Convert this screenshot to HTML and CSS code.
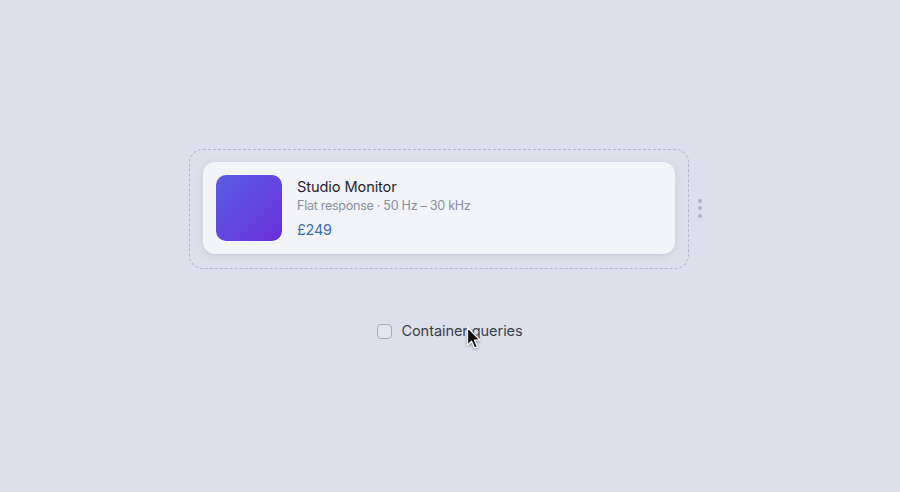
FILE: index.html
```html
<!DOCTYPE html>
<html lang="en">
<head>
<meta charset="utf-8">
<title>Container queries</title>
<link rel="stylesheet" href="styles.css">
</head>
<body>
<main class="page">
  <div class="stage">
    <div class="frame">
      <div class="card">
        <div class="thumb"></div>
        <div class="info">
          <div class="title">Studio Monitor</div>
          <div class="sub">Flat response · 50 Hz – 30 kHz</div>
          <div class="price">£249</div>
        </div>
      </div>
    </div>
    <div class="handle"><span></span><span></span><span></span></div>
  </div>
  <label class="toggle">
    <span class="box"></span>
    <span class="label">Container queries</span>
    <svg class="cursor" width="16" height="24" viewBox="0 0 16 24"><path d="M1.5 1.5 L1.5 19 L5.6 15.2 L8.6 22 L11.4 20.8 L8.5 14.2 L14 14.2 Z" fill="#111" stroke="#fff" stroke-width="1.2" stroke-linejoin="round"/></svg>
  </label>
</main>
</body>
</html>
```
FILE: styles.css
```css
* { box-sizing: border-box; }
html, body { margin: 0; height: 100%; }
body {
  background: #dde0ea;
  font-family: "Inter", "Noto Sans", sans-serif;
  overflow: hidden;
}
.page {
  display: flex;
  flex-direction: column;
  align-items: center;
  padding-top: 149px;
}
.stage {
  display: flex;
  align-items: center;
}
.frame {
  width: 500px;
  height: 120px;
  border: 1.5px dashed #b3b7c7;
  border-radius: 14px;
  padding: 12px 13px;
}
.card {
  height: 92px;
  background: #f3f4f9;
  border-radius: 12px;
  box-shadow: 0 2px 8px rgba(60, 70, 100, 0.10), 0 1px 2px rgba(60, 70, 100, 0.06);
  display: flex;
  align-items: center;
  padding: 0 13px;
  gap: 15px;
}
.thumb {
  width: 66px;
  height: 66px;
  border-radius: 10px;
  background: linear-gradient(135deg, #5a5de8 0%, #6a2fd6 100%);
  flex: none;
}
.info { display: flex; flex-direction: column; }
.title {
  font-size: 14.6px;
  line-height: 20px;
  letter-spacing: -0.1px;
  color: #1f2330;
}
.sub {
  font-size: 12.6px;
  line-height: 18px;
  letter-spacing: -0.3px;
  color: #8a8fa0;
}
.price {
  margin-top: 5px;
  font-size: 14.4px;
  line-height: 20px;
  letter-spacing: -0.2px;
  color: #3a6db3;
}
.handle {
  width: 22px;
  display: flex;
  flex-direction: column;
  align-items: center;
  gap: 3.5px;
  margin-top: -2px;
}
.handle span {
  width: 4px;
  height: 4px;
  border-radius: 50%;
  background: #aeb2c0;
}
.toggle {
  position: relative;
  margin-top: 52px;
  display: flex;
  align-items: center;
  gap: 9px;
}
.box {
  width: 15px;
  height: 15px;
  border: 1.5px solid #a6aab8;
  border-radius: 4px;
  background: #e3e6ee;
}
.label {
  font-size: 14.6px;
  line-height: 20px;
  letter-spacing: -0.1px;
  color: #3b3f4c;
}
.cursor {
  position: absolute;
  left: 89px;
  top: 5px;
  filter: drop-shadow(0 1px 1.5px rgba(0,0,0,0.35));
}
```
